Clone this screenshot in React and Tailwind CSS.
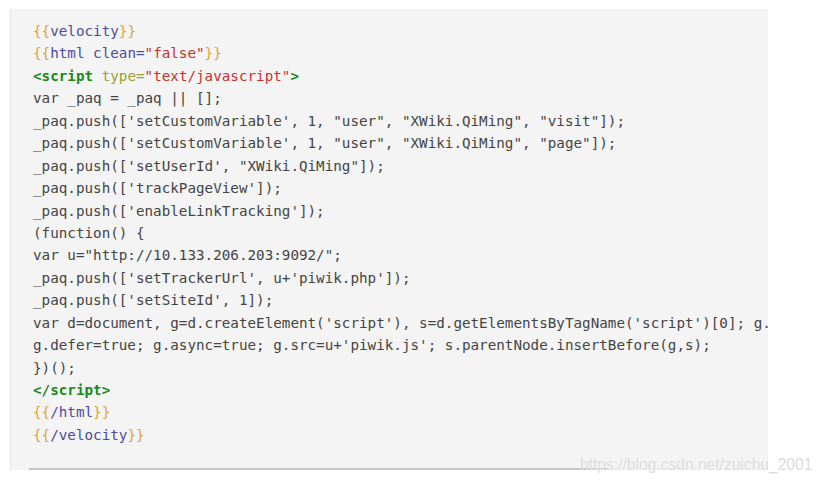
import React from "react";

const B = ({ children }) => <span className="text-[#e0a437]">{children}</span>;
const P = ({ children }) => <span className="text-[#4c4c9a]">{children}</span>;
const R = ({ children }) => <span className="text-[#c9302c]">{children}</span>;
const G = ({ children }) => <span className="text-[#1a8a1a] font-bold">{children}</span>;
const O = ({ children }) => <span className="text-[#9ba033]">{children}</span>;

export default function App() {
  return (
    <div className="relative w-[823px] h-[483px] bg-white pt-[9px] pl-[10px]">
      <div className="w-[758px] h-[461px] bg-[#f4f4f4] border-l border-[#e4e4e4] overflow-hidden flex flex-col">
        <pre
          className="pt-[11px] pl-[22px] text-[14.25px] leading-[22.43px] text-[#444] whitespace-pre"
          style={{ fontFamily: '"DejaVu Sans Mono", monospace' }}
        >
          <div><B>{"{{"}</B><P>velocity</P><B>{"}}"}</B></div>
          <div><B>{"{{"}</B><P>html clean=</P><R>"false"</R><B>{"}}"}</B></div>
          <div><G>{"<script"}</G> <O>type=</O><R>"text/javascript"</R><G>{">"}</G></div>
          <div>{"var _paq = _paq || [];"}</div>
          <div>{`_paq.push(['setCustomVariable', 1, "user", "XWiki.QiMing", "visit"]);`}</div>
          <div>{`_paq.push(['setCustomVariable', 1, "user", "XWiki.QiMing", "page"]);`}</div>
          <div>{`_paq.push(['setUserId', "XWiki.QiMing"]);`}</div>
          <div>{`_paq.push(['trackPageView']);`}</div>
          <div>{`_paq.push(['enableLinkTracking']);`}</div>
          <div>{`(function() {`}</div>
          <div>{`var u="http://10.133.206.203:9092/";`}</div>
          <div>{`_paq.push(['setTrackerUrl', u+'piwik.php']);`}</div>
          <div>{`_paq.push(['setSiteId', 1]);`}</div>
          <div>{`var d=document, g=d.createElement('script'), s=d.getElementsByTagName('script')[0]; g.type='text/javascript';`}</div>
          <div>{`g.defer=true; g.async=true; g.src=u+'piwik.js'; s.parentNode.insertBefore(g,s);`}</div>
          <div>{`})();`}</div>
          <div><G>{"</script>"}</G></div>
          <div><B>{"{{"}</B><P>/html</P><B>{"}}"}</B></div>
          <div><B>{"{{"}</B><P>/velocity</P><B>{"}}"}</B></div>
        </pre>
        <div className="mt-[22px] ml-[18px] w-[578px] h-[2px] bg-[#c6c6c6]"></div>
      </div>
      <div
        className="absolute left-[580px] top-[455px] text-[15.6px] leading-[20px] text-[#dcdcdc] whitespace-nowrap"
        style={{ fontFamily: '"Liberation Sans", Arial, sans-serif', textShadow: "0 0 1px rgba(255,255,255,0.8)" }}
      >
        https://blog.csdn.net/zuichu_2001
      </div>
    </div>
  );
}
